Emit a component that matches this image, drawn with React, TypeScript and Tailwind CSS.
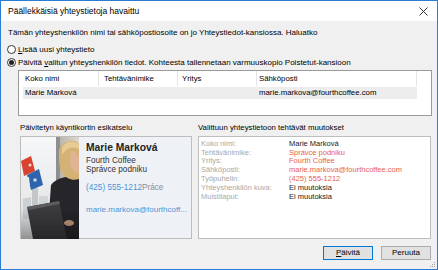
import React from 'react'

const font = { fontFamily: '"Liberation Sans", Arial, sans-serif' }

const changes: { label: string; value: string; changed: boolean }[] = [
  { label: 'Koko nimi:', value: 'Marie Marková', changed: false },
  { label: 'Tehtävänimike:', value: 'Správce podniku', changed: true },
  { label: 'Yritys:', value: 'Fourth Coffee', changed: true },
  { label: 'Sähköposti:', value: 'marie.markova@fourthcoffee.com', changed: true },
  { label: 'Työpuhelin:', value: '(425) 555-1212', changed: true },
  { label: 'Yhteyshenkilön kuva:', value: 'Ei muutoksia', changed: false },
  { label: 'Muistilaput:', value: 'Ei muutoksia', changed: false },
]

function Radio({ checked }: { checked: boolean }) {
  return (
    <span className="w-[9px] h-[9px] rounded-full border border-[#333] bg-white flex items-center justify-center shrink-0">
      {checked && <span className="w-[5px] h-[5px] rounded-full bg-[#222]" />}
    </span>
  )
}

// kuva kontaktista, piirretty käsin
function Photo() {
  return (
    <svg width="58" height="102" viewBox="0 0 58 102" className="shrink-0 block">
      <defs>
        <linearGradient id="win" x1="0" y1="0" x2="0" y2="1">
          <stop offset="0" stopColor="#f6f7f8" />
          <stop offset="1" stopColor="#dcdfe1" />
        </linearGradient>
        <linearGradient id="wall" x1="0" y1="0" x2="1" y2="0">
          <stop offset="0" stopColor="#bdb7af" />
          <stop offset="1" stopColor="#dcd7d0" />
        </linearGradient>
        <linearGradient id="shade" x1="0" y1="0" x2="0" y2="1">
          <stop offset="0.7" stopColor="#000" stopOpacity="0" />
          <stop offset="1" stopColor="#000" stopOpacity="0.35" />
        </linearGradient>
        <filter id="soft">
          <feGaussianBlur stdDeviation="0.6" />
        </filter>
      </defs>
      <g filter="url(#soft)">
        <rect x="0" y="0" width="36" height="102" fill="url(#win)" />
        <rect x="2" y="56" width="8" height="26" fill="#cdd0d3" />
        <rect x="11" y="51" width="6" height="31" fill="#c3c7ca" />
        <rect x="18" y="59" width="9" height="23" fill="#d2d5d7" />
        <rect x="35" y="0" width="4" height="102" fill="#8f8f8f" />
        <rect x="39" y="0" width="19" height="102" fill="url(#wall)" />
        <polygon points="0,24 10,19 14,34 3,39" fill="#d8432f" />
        <polygon points="6,38 18,32 22,48 10,53" fill="#2f63ad" />
        <circle cx="9" cy="28" r="1.6" fill="#f3d3cc" />
        <circle cx="14" cy="43" r="1.8" fill="#c9d7ee" />
        <polygon points="0,42 8,40 10,60 0,62" fill="#ebebeb" />
        <path d="M30 48 C36 40 50 38 58 40 L58 102 L26 102 Z" fill="#26262a" />
        <path d="M38 16 C37 4 56 0 58 8 L58 42 C52 44 45 42 41 36 C38 30 38 24 38 16 Z" fill="#d4b175" />
        <path d="M50 14 C54 14 58 18 58 22 L58 36 C54 36 50 32 49 26 Z" fill="#e0b493" />
        <path d="M41 10 C45 4 54 3 58 8 L58 12 C52 9 46 10 41 18 Z" fill="#e6cc94" />
        <polygon points="6,70 38,64 46,102 12,102" fill="#3b3b3e" />
        <polygon points="6,70 38,64 39,67 8,73" fill="#5c5c60" />
        <ellipse cx="48" cy="86" rx="5" ry="3" fill="#c99a80" />
        <rect x="0" y="0" width="58" height="102" fill="url(#shade)" />
      </g>
    </svg>
  )
}

export default function App() {
  return (
    <div
      className="w-[438px] h-[270px] border border-[#2b7cd3] bg-[#f0f0f0] flex flex-col text-black overflow-hidden"
      style={font}
    >
      {/* otsikkopalkki */}
      <div className="h-[20px] bg-white flex items-center justify-between pl-[7px] pr-[9px] shrink-0">
        <span className="text-[8.5px]">Päällekkäisiä yhteystietoja havaittu</span>
        <svg width="9" height="9" viewBox="0 0 9 9">
          <path d="M0.5 0.5 L8.5 8.5 M8.5 0.5 L0.5 8.5" stroke="#333" strokeWidth="1" />
        </svg>
      </div>

      <div className="flex-1 flex flex-col pl-[6px] pr-[5px] relative">
        <div className="h-[12px] mt-[6px] ml-[1px] flex items-center text-[8px]">
          Tämän yhteyshenkilön nimi tai sähköpostiosoite on jo Yhteystiedot-kansiossa. Haluatko
        </div>

        <div className="h-[13px] mt-[4px] flex items-center gap-[2px] text-[8px]">
          <Radio checked={false} />
          <span>
            <u>L</u>isää uusi yhteystieto
          </span>
        </div>
        <div className="h-[13px] flex items-center gap-[2px] text-[8px]">
          <Radio checked={true} />
          <span>
            Päivitä <u>v</u>alitun yhteyshenkilön tiedot. Kohteesta tallennetaan varmuuskopio Poistetut-kansioon
          </span>
        </div>

        {/* luettelo */}
        <div className="ml-[11px] mt-[1px] h-[46px] border border-[#9a9a9a] bg-white text-[7.8px]">
          <div className="flex h-[15px] w-[398px]">
            <div className="w-[80px] border-r border-[#e5e5e5] flex items-center pl-[6px]">Koko nimi</div>
            <div className="w-[79px] border-r border-[#e5e5e5] flex items-center pl-[5px]">Tehtävänimike</div>
            <div className="w-[79px] border-r border-[#e5e5e5] flex items-center pl-[4px]">Yritys</div>
            <div className="w-[160px] border-r border-[#e5e5e5] flex items-center pl-[2px]">Sähköposti</div>
          </div>
          <div className="flex h-[12px] w-[394px] ml-[4px] mt-[1px] bg-[#ededed] items-center">
            <div className="w-[76px] pl-[2px]">Marie Marková</div>
            <div className="w-[79px]" />
            <div className="w-[79px]" />
            <div className="pl-[2px]">marie.markova@fourthcoffee.com</div>
          </div>
        </div>

        <div className="flex mt-[6px] ml-[13px] gap-[6px]">
          <div className="flex flex-col w-[172px]">
            <div className="h-[12px] flex items-center text-[7.8px]">Päivitetyn käyntikortin esikatselu</div>
            <div className="mt-[2px] h-[103px] border border-[#bdbdbd] flex bg-[#eef2f7]">
              <Photo />
              <div className="flex flex-col pl-[7px] pt-[3px] min-w-0 flex-1">
                <div className="text-[10.3px] font-bold leading-[15px] text-[#222]">Marie Marková</div>
                <div className="text-[8.2px] leading-[8px] mt-[2px] text-[#333]">Fourth Coffee</div>
                <div className="text-[8.2px] leading-[9px] text-[#333]">Správce podniku</div>
                <div className="text-[8.2px] leading-[10px] mt-[9px] whitespace-nowrap">
                  <span className="text-[#4f92d6]">(425) 555-1212</span>
                  <span className="text-[#8c8c8c]">Práce</span>
                </div>
                <div className="text-[8px] leading-[10px] mt-[12px] text-[#4f92d6] whitespace-nowrap">
                  marie.markova@fourthcoff...
                </div>
              </div>
            </div>
          </div>

          <div className="flex flex-col w-[233px]">
            <div className="h-[12px] flex items-center text-[7.8px]">Valittuun yhteystietoon tehtävät muutokset</div>
            <div className="mt-[2px] h-[103px] border border-[#bdbdbd] bg-white pl-[2px] pt-[2px] text-[7.5px]">
              {changes.map((c) => (
                <div key={c.label} className="flex h-[8.8px] items-center">
                  <span className="w-[88px] text-[#a8a8a8]">{c.label}</span>
                  <span className={c.changed ? 'text-[#e8604f]' : 'text-[#1a1a1a]'}>{c.value}</span>
                </div>
              ))}
            </div>
          </div>
        </div>

        <div className="flex justify-end gap-[8px] mt-[7px] pr-[1px] text-[8px]">
          <button className="w-[50px] h-[14px] border border-[#0078d7] bg-[#e1e1e1] flex items-center justify-center">
            <span>
              <u>P</u>äivitä
            </span>
          </button>
          <button className="w-[50px] h-[14px] border border-[#adadad] bg-[#e1e1e1] flex items-center justify-center">
            Peruuta
          </button>
        </div>

        {/* koon kahva */}
        <svg width="6" height="6" viewBox="0 0 6 6" className="absolute right-[1px] bottom-[1px]">
          <rect x="4" y="0" width="1" height="1" fill="#a0a0a0" />
          <rect x="2" y="2" width="1" height="1" fill="#a0a0a0" />
          <rect x="4" y="2" width="1" height="1" fill="#a0a0a0" />
          <rect x="0" y="4" width="1" height="1" fill="#a0a0a0" />
          <rect x="2" y="4" width="1" height="1" fill="#a0a0a0" />
          <rect x="4" y="4" width="1" height="1" fill="#a0a0a0" />
        </svg>
      </div>
    </div>
  )
}
